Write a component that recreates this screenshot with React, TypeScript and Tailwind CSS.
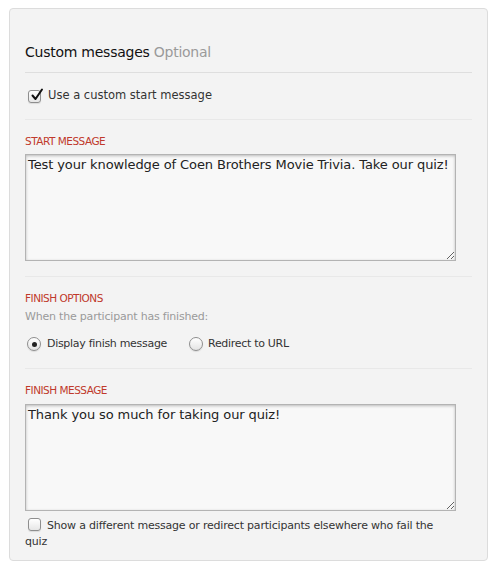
import { useState } from "react";

const font = { fontFamily: '"DejaVu Sans", Verdana, sans-serif' };

function Check({ checked }: { checked: boolean }) {
  return (
    <span className="relative inline-flex h-[13px] w-[13px] shrink-0 items-center justify-center rounded-[3px] border border-[#8e8e8e] bg-gradient-to-b from-white to-[#e6e6e6] shadow-[0_1px_1px_rgba(0,0,0,0.1)]">
      {checked && (
        <svg viewBox="0 0 14 14" className="absolute left-[1px] top-[-3px] h-[14px] w-[14px]">
          <path d="M2.5 7.5 L5.5 11 L12 1.5" fill="none" stroke="#111" strokeWidth="2" strokeLinecap="round" strokeLinejoin="round" />
        </svg>
      )}
    </span>
  );
}

function Radio({ checked }: { checked: boolean }) {
  return (
    <span className="inline-flex h-[14px] w-[14px] shrink-0 items-center justify-center rounded-full border border-[#8e8e8e] bg-gradient-to-b from-white to-[#e4e4e4] shadow-[0_1px_1px_rgba(0,0,0,0.1)]">
      {checked && <span className="h-[5px] w-[5px] rounded-full bg-[#222]" />}
    </span>
  );
}

function Label({ children }: { children: string }) {
  return <div className="text-[10.5px] uppercase leading-[14px] tracking-[-0.5px] text-[#c0392b]">{children}</div>;
}

function Box({ value }: { value: string }) {
  const [text, setText] = useState(value);
  return (
    <textarea
      value={text}
      onChange={(e) => setText(e.target.value)}
      className="block h-[107px] w-[431px] resize-y border border-[#b3b3b3] bg-[#f8f8f8] px-[2px] py-[2px] text-[13px] leading-[16px] tracking-[-0.1px] text-[#222] shadow-[inset_0_1px_3px_rgba(0,0,0,0.25)] outline-none"
      style={font}
    />
  );
}

export default function App() {
  return (
    <div className="bg-white px-[9px] pt-[8px]" style={font}>
      <div className="h-[553px] w-[479px] rounded-[4px] border border-[#dcdcdc] bg-[#f3f3f3] px-[15px]">
        {/* header */}
        <div className="flex h-[64px] items-end border-b border-[#dedede] pb-[11px]">
          <h2 className="text-[14px] leading-[18px] tracking-[-0.25px] text-[#111]">
            Custom messages <span className="text-[#9a9a9a]">Optional</span>
          </h2>
        </div>

        <label className="flex h-[47px] items-center gap-[7px] border-b border-[#e8e8e8] pl-[3px] text-[11.5px] text-[#333]">
          <Check checked />
          <span>Use a custom start message</span>
        </label>

        {/* start message */}
        <div className="border-b border-[#e8e8e8] pb-[15px] pt-[14px]">
          <Label>Start message</Label>
          <div className="mt-[6px]">
            <Box value="Test your knowledge of Coen Brothers Movie Trivia. Take our quiz!" />
          </div>
        </div>

        {/* finish options */}
        <div className="border-b border-[#e8e8e8] pb-[16px] pt-[14px]">
          <Label>Finish options</Label>
          <div className="mt-[5px] text-[11px] leading-[14px] tracking-[-0.2px] text-[#9a9a9a]">When the participant has finished:</div>
          <div className="mt-[12px] flex h-[16px] items-center pl-[2px] text-[11px] tracking-[-0.3px] text-[#333]">
            <label className="flex items-center gap-[6px]">
              <Radio checked />
              <span>Display finish message</span>
            </label>
            <label className="ml-[22px] flex items-center gap-[5px]">
              <Radio checked={false} />
              <span>Redirect to URL</span>
            </label>
          </div>
        </div>

        {/* finish message */}
        <div className="pt-[14px]">
          <Label>Finish message</Label>
          <div className="mt-[7px]">
            <Box value="Thank you so much for taking our quiz!" />
          </div>
          <label className="mt-[5px] block pr-[30px] text-[11px] leading-[16px] tracking-[-0.2px] text-[#333]">
            <span className="relative top-[2px] ml-[3px] mr-[6px] inline-flex align-baseline">
              <Check checked={false} />
            </span>
            Show a different message or redirect participants elsewhere who fail the quiz
          </label>
        </div>
      </div>
    </div>
  );
}
